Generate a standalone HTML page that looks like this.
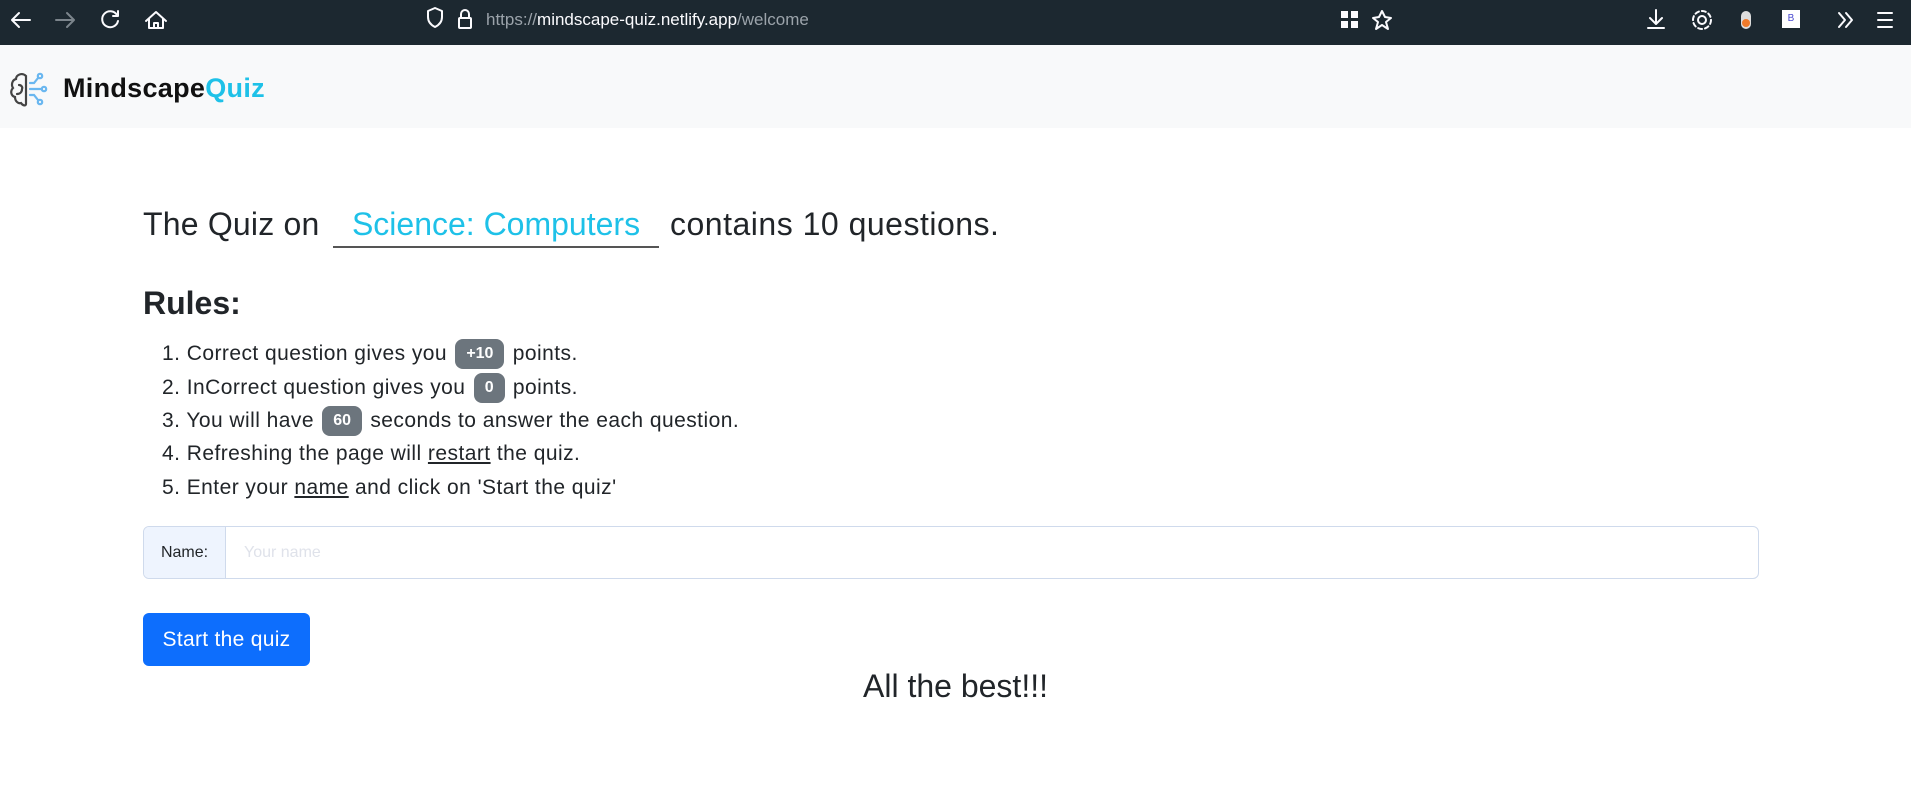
<!DOCTYPE html>
<html><head><meta charset="utf-8"><style>
*{box-sizing:border-box;margin:0;padding:0}
body{width:1911px;height:810px;overflow:hidden;background:#fff;font-family:"Liberation Sans",sans-serif;color:#212529;position:relative}
.chrome{position:absolute;left:0;top:0;width:1911px;height:45px;background:#1c2830}
.nav{position:absolute;left:0;top:45px;width:1911px;height:83px;background:#f8f9fa}
.abs{position:absolute;white-space:nowrap}
.badge{display:inline-block;background:#6c757d;color:#fff;font-weight:bold;font-size:16px;letter-spacing:0;border-radius:8px;height:30px;line-height:30px;padding:0 11px;vertical-align:middle;margin:0 2px;position:relative;top:0}
.li{position:absolute;left:162px;font-size:21px;letter-spacing:0.45px;white-space:nowrap;line-height:30px}
u{text-decoration:underline}
</style></head><body>
<div class="chrome">
<svg width="1911" height="45" style="position:absolute;left:0;top:0" fill="none" stroke="#fbfbfe" stroke-width="2" stroke-linecap="round" stroke-linejoin="round">
<path d="M30 20H12M19 13l-7 7 7 7"/>
<path d="M56 20h18M67 13l7 7-7 7" stroke="#7c858c"/>
<path d="M117 15a8 8 0 1 0 1 6M118 11v5h-5"/>
<path d="M146 21l10-9 10 9M149 19v9h14v-9M154 28v-5h4v5"/>
<path d="M428 11l7-3 7 3v6c0 5-3 8-7 10-4-2-7-5-7-10z"/>
<rect x="459" y="18" width="12" height="10" rx="1"/><path d="M461 18v-4a4 4 0 0 1 8 0v4"/>
<path d="M1382 11l3 6 6 1-5 4 2 7-6-4-6 4 2-7-5-4 6-1z"/>
<path d="M1656 10v14M1650 18l6 6 6-6M1648 28h16"/>
<circle cx="1702" cy="20" r="4"/><circle cx="1702" cy="20" r="9" stroke-dasharray="4 3"/>
<path d="M1839 13l6 7-6 7M1846 13l6 7-6 7"/>
<path d="M1878 13h14M1878 20h14M1878 27h14"/>
</svg>
<div class="abs" style="left:1341px;top:11px;width:7px;height:7px;background:#fbfbfe"></div>
<div class="abs" style="left:1351px;top:11px;width:7px;height:7px;background:#fbfbfe"></div>
<div class="abs" style="left:1341px;top:21px;width:7px;height:7px;background:#fbfbfe"></div>
<div class="abs" style="left:1351px;top:21px;width:7px;height:7px;background:#fbfbfe"></div>
<div class="abs" style="left:1741px;top:11px;width:10px;height:18px;border-radius:5px;background:#ddd"></div>
<div class="abs" style="left:1742px;top:19px;width:8px;height:8px;border-radius:4px;background:#f07a2a"></div>
<div class="abs" style="left:1782px;top:10px;width:18px;height:18px;background:#fff;color:#4a4ad0;font-size:10px;text-align:center;line-height:18px">B</div>
<div class="abs" style="left:486px;top:10px;font-size:17px;color:#fbfbfe"><span style="color:#9ba3aa">https://</span>mindscape-quiz.netlify.app<span style="color:#9ba3aa">/welcome</span></div>
</div>
<div class="nav">
<svg width="42" height="42" style="position:absolute;left:9px;top:25px" fill="none" stroke-width="2.2" stroke-linecap="round">
<path d="M17 6c-4-4-10-1-10 3-4 1-5 6-3 9-3 3-2 8 2 9 0 4 3 7 6 6 2 3 5 3 5 1z" stroke="#444"/>
<path d="M10 15c2 0 4 2 3 4M8 24c3 0 5-2 5-5" stroke="#444"/>
<g stroke="#6ab7f0"><path d="M21 13h4l4-5M21 19h12M21 25h4l4 5"/><circle cx="31" cy="6" r="2.2"/><circle cx="35" cy="19" r="2.2"/><circle cx="31" cy="32" r="2.2"/></g>
</svg>
<div class="abs" style="left:63px;top:28px;font-size:27px;font-weight:bold;color:#111;letter-spacing:0.3px">Mindscape<span style="color:#1ec1e8">Quiz</span></div>
</div>
<div class="abs" style="left:143px;top:206px;font-size:32px;letter-spacing:0.2px">The Quiz on</div>
<div class="abs" style="left:333px;top:206px;width:326px;height:42px;border-bottom:2px solid #555;color:#1ec1e8;font-size:32px;text-align:center">Science: Computers</div>
<div class="abs" style="left:670px;top:206px;font-size:32px;letter-spacing:0.5px">contains 10 questions.</div>
<div class="abs" style="left:143px;top:285px;font-size:32px;font-weight:bold">Rules:</div>
<div class="li" style="top:339px">1. Correct question gives you <span class="badge">+10</span> points.</div>
<div class="li" style="top:373px">2. InCorrect question gives you <span class="badge">0</span> points.</div>
<div class="li" style="top:406px">3. You will have <span class="badge">60</span> seconds to answer the each question.</div>
<div class="li" style="top:439px">4. Refreshing the page will <u>restart</u> the quiz.</div>
<div class="li" style="top:473px">5. Enter your <u>name</u> and click on 'Start the quiz'</div>
<div class="abs" style="left:143px;top:526px;width:1616px;height:53px;border:1px solid #cfdaec;border-radius:6px;overflow:hidden">
<div style="position:absolute;left:0;top:0;width:82px;height:51px;background:#eef4fe;border-right:1px solid #cfdaec;font-size:16px;line-height:51px;text-align:center">Name:</div>
<div style="position:absolute;left:100px;top:0;font-size:16px;line-height:51px;color:#dfe2ea">Your name</div>
</div>
<div class="abs" style="left:143px;top:613px;width:167px;height:53px;background:#0d6efd;border-radius:6px;color:#fff;font-size:21px;line-height:53px;text-align:center;letter-spacing:0.3px">Start the quiz</div>
<div class="abs" style="left:0;width:1911px;top:668px;text-align:center;font-size:32px;padding-left:0">All the best!!!</div>
</body></html>
